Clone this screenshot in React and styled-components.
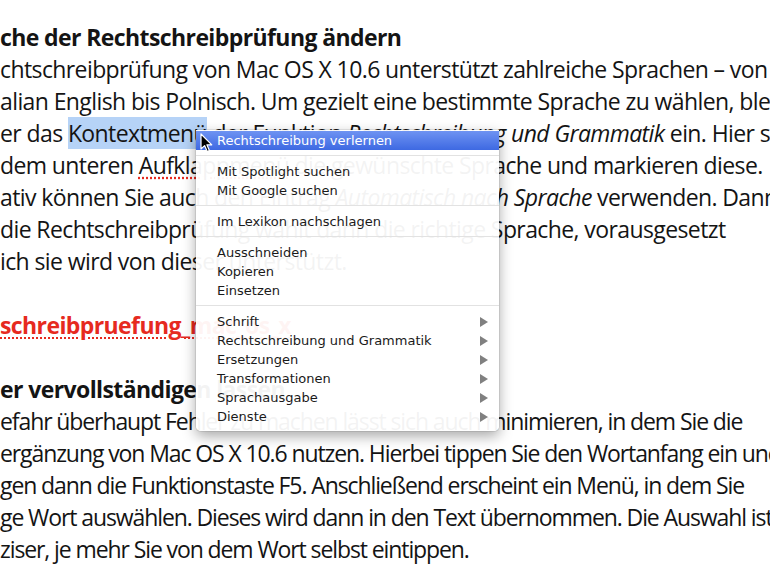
import React from "react";
import styled, { createGlobalStyle, css } from "styled-components";

const GlobalStyle = createGlobalStyle`
  html, body {
    margin: 0;
    padding: 0;
    background: #ffffff;
  }
  body {
    width: 770px;
    height: 578px;
    overflow: hidden;
  }
`;

const Page = styled.div`
  position: relative;
  width: 770px;
  height: 578px;
  overflow: hidden;
  background: #fff;
`;

const Article = styled.div`
  padding-top: 21px;
  font-family: "Open Sans", "Noto Sans", sans-serif;
  font-size: 23px;
  letter-spacing: -0.6px;
  color: #141414;
`;

const Line = styled.div`
  height: 32px;
  line-height: 32px;
  white-space: nowrap;
  overflow: hidden;
  ${(p) =>
    p.$tight &&
    css`
      letter-spacing: -1.1px;
    `}
  ${(p) =>
    p.$kind === "heading" &&
    css`
      font-weight: 700;
    `}
  ${(p) =>
    p.$kind === "link" &&
    css`
      font-weight: 700;
      color: #e62a1f;
    `}
`;

const Em = styled.em`
  font-style: italic;
`;

const Selected = styled.span`
  display: inline-block;
  background: #b6d3f7;
`;

const Misspelled = styled.span`
  text-decoration: underline dotted #e62a1f;
  text-underline-offset: 3px;
`;

const LinkText = styled.span`
  text-decoration: underline dotted #e62a1f;
  text-decoration-thickness: 2px;
  text-underline-offset: 3px;
`;

const Menu = styled.div`
  position: absolute;
  left: 196px;
  top: 130px;
  width: 303px;
  padding: 1px 0 5px;
  background: rgba(255, 255, 255, 0.95);
  border-radius: 0 0 5px 5px;
  box-shadow: 0 5px 14px rgba(0, 0, 0, 0.35), 0 0 0 1px rgba(0, 0, 0, 0.08);
  font-family: "DejaVu Sans", "Liberation Sans", sans-serif;
  font-size: 13px;
  color: #1a1a1a;
`;

const Item = styled.div`
  display: flex;
  align-items: center;
  justify-content: space-between;
  height: 19px;
  padding: 0 11px 0 21px;
  ${(p) =>
    p.$active &&
    css`
      color: #fff;
      background: linear-gradient(#6e93f2, #3e69e2);
    `}
`;

const Separator = styled.div`
  height: 1px;
  margin: 5px 0 6px;
  background: #e2e2e2;
`;

const Arrow = styled.svg`
  width: 8px;
  height: 10px;
  fill: #808080;
`;

const Cursor = styled.svg`
  position: absolute;
  left: 200px;
  top: 133px;
  width: 13px;
  height: 20px;
`;

const groups = [
  [{ label: "Rechtschreibung verlernen", active: true }],
  [{ label: "Mit Spotlight suchen" }, { label: "Mit Google suchen" }],
  [{ label: "Im Lexikon nachschlagen" }],
  [{ label: "Ausschneiden" }, { label: "Kopieren" }, { label: "Einsetzen" }],
  [
    { label: "Schrift", sub: true },
    { label: "Rechtschreibung und Grammatik", sub: true },
    { label: "Ersetzungen", sub: true },
    { label: "Transformationen", sub: true },
    { label: "Sprachausgabe", sub: true },
    { label: "Dienste", sub: true },
  ],
];

function ContextMenu() {
  return (
    <Menu>
      {groups.map((group, gi) => (
        <React.Fragment key={gi}>
          {gi > 0 && <Separator />}
          {group.map((item) => (
            <Item key={item.label} $active={item.active}>
              <span>{item.label}</span>
              {item.sub && (
                <Arrow viewBox="0 0 8 10">
                  <polygon points="0,0 8,5 0,10" />
                </Arrow>
              )}
            </Item>
          ))}
        </React.Fragment>
      ))}
    </Menu>
  );
}

export default function App() {
  return (
    <>
      <GlobalStyle />
      <Page>
        <Article>
          <Line $kind="heading">che der Rechtschreibprüfung ändern</Line>
          <Line>chtschreibprüfung von Mac OS X 10.6 unterstützt zahlreiche Sprachen – von</Line>
          <Line>alian English bis Polnisch. Um gezielt eine bestimmte Sprache zu wählen, blenden</Line>
          <Line>
            er das <Selected>Kontextmenü</Selected> der Funktion{" "}
            <Em>Rechtschreibung und Grammatik</Em> ein. Hier sehen
          </Line>
          <Line>
            dem unteren <Misspelled>Aufklappmenü</Misspelled> die gewünschte Sprache und markieren diese.
          </Line>
          <Line>
            ativ können Sie auch den Eintrag <Em>Automatisch nach Sprache</Em> verwenden. Dann
          </Line>
          <Line> die Rechtschreibprüfung wählt dann die richtige Sprache, vorausgesetzt</Line>
          <Line>ich sie wird von dieser unterstützt.</Line>
          <Line />
          <Line $kind="link">
            <LinkText>schreibpruefung_mac_os_x</LinkText>
          </Line>
          <Line />
          <Line $kind="heading">er vervollständigen lassen</Line>
          <Line $tight>efahr überhaupt Fehler zu machen lässt sich auch minimieren, in dem Sie die</Line>
          <Line $tight>ergänzung von Mac OS X 10.6 nutzen. Hierbei tippen Sie den Wortanfang ein und</Line>
          <Line $tight>gen dann die Funktionstaste F5. Anschließend erscheint ein Menü, in dem Sie</Line>
          <Line $tight>ge Wort auswählen. Dieses wird dann in den Text übernommen. Die Auswahl ist</Line>
          <Line $tight>ziser, je mehr Sie von dem Wort selbst eintippen.</Line>
        </Article>
        <ContextMenu />
        <Cursor viewBox="0 0 13 20">
          <path
            d="M1 1 L1 16 L4.6 12.6 L7.2 18.6 L9.4 17.6 L6.9 11.8 L11.8 11.8 Z"
            fill="#000"
            stroke="#fff"
            strokeWidth="1.2"
            strokeLinejoin="round"
          />
        </Cursor>
      </Page>
    </>
  );
}
